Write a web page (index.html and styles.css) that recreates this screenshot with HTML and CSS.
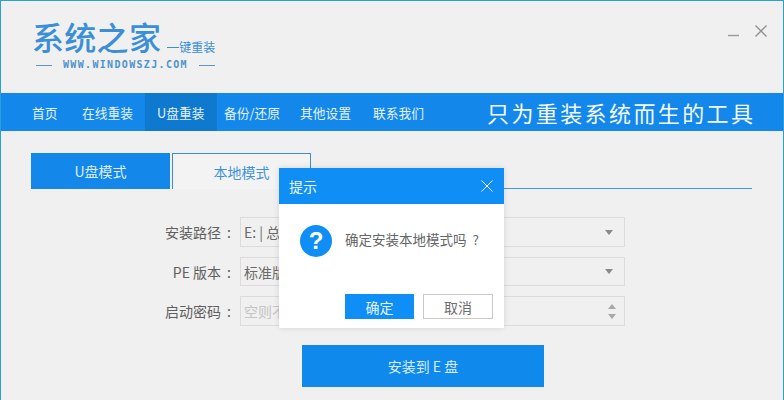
FILE: index.html
```html
<!DOCTYPE html>
<html lang="zh-CN">
<head>
<meta charset="utf-8">
<title>系统之家一键重装</title>
<link rel="stylesheet" href="styles.css">
</head>
<body>
<div class="window">
  <header class="header">
    <div class="logo">
      <div class="logo-top">
        <span class="logo-name">系统之家</span>
        <span class="logo-sub"><i class="logo-dash"></i>键重装</span>
      </div>
      <div class="logo-url">
        <i class="url-line"></i>
        <span class="url-text">WWW.WINDOWSZJ.COM</span>
        <i class="url-line"></i>
      </div>
    </div>
    <div class="win-controls">
      <svg class="icon-min" width="11" height="12" viewBox="0 0 11 12"><path d="M0 10.5H11" stroke="#9a9a9a" stroke-width="1.4" fill="none"/></svg>
      <svg class="icon-close" width="12" height="12" viewBox="0 0 12 12"><path d="M.5.5L11.5 11.5M11.5.5L.5 11.5" stroke="#8f8f8f" stroke-width="1.3" fill="none"/></svg>
    </div>
  </header>
  <nav class="nav">
    <a class="nav-item item-home">首页</a>
    <a class="nav-item item-online">在线重装</a>
    <a class="nav-item item-usb active">U盘重装</a>
    <a class="nav-item item-backup">备份/还原</a>
    <a class="nav-item item-other">其他设置</a>
    <a class="nav-item item-contact">联系我们</a>
    <span class="slogan">只为重装系统而生的工具</span>
  </nav>
  <main class="content">
    <div class="tabs">
      <div class="tab tab-on">U盘模式</div>
      <div class="tab tab-local">本地模式</div>
      <div class="tab-rule"></div>
    </div>
    <form class="form">
      <div class="row">
        <span class="label">安装路径<span class="colon">:</span></span>
        <div class="field"><span>E: | 总共</span><i class="arrow-down"></i></div>
      </div>
      <div class="row row-b">
        <span class="label">PE 版本<span class="colon">:</span></span>
        <div class="field"><span>标准版</span><i class="arrow-down"></i></div>
      </div>
      <div class="row row-c">
        <span class="label">启动密码<span class="colon">:</span></span>
        <div class="field field-pass"><span class="placeholder">空则不设置密码</span>
          <span class="spin"><i class="spin-up"></i><i class="spin-down"></i></span>
        </div>
      </div>
    </form>
    <div class="install"><span>安装到 E 盘</span></div>
  </main>
  <div class="dialog">
    <div class="dialog-title">
      <span>提示</span>
      <svg width="12" height="12" viewBox="0 0 12 12"><path d="M.5.5L11.5 11.5M11.5.5L.5 11.5" stroke="#fff" stroke-width="1" fill="none"/></svg>
    </div>
    <div class="dialog-body">
      <span class="q-icon">?</span>
      <span class="q-text">确定安装本地模式吗 ?</span>
    </div>
    <div class="dialog-btns">
      <span class="btn btn-ok">确定</span>
      <span class="btn btn-cancel">取消</span>
    </div>
  </div>
</div>
</body>
</html>
```
FILE: styles.css
```css
* { box-sizing: border-box; }
html, body { margin: 0; padding: 0; }
body {
  width: 784px;
  height: 400px;
  overflow: hidden;
  font-family: "Noto Sans CJK SC", "Liberation Sans", sans-serif;
}
i { display: block; font-style: normal; }
.window {
  position: relative;
  width: 784px;
  height: 400px;
  overflow: hidden;
  background: #f0f0f0;
  border: 1px solid #2a9fdc;
  border-bottom: 0;
}
.header {
  height: 92px;
  display: flex;
  justify-content: space-between;
  padding: 0 16px 0 32px;
}
.logo { padding-top: 14px; }
.logo-top { display: flex; align-items: flex-end; height: 42px; }
.logo-name {
  margin-left: -1px;
  font-size: 32px;
  line-height: 42px;
  letter-spacing: 0.3px;
  color: #3b8fd6;
  font-weight: 500;
}
.logo-sub {
  display: flex;
  align-items: center;
  margin: 0 0 2px 6px;
  font-size: 12px;
  line-height: 16px;
  color: #3b8fd6;
}
.logo-dash { width: 12px; height: 1px; background: #3b8fd6; }
.logo-url {
  display: flex;
  align-items: center;
  gap: 11px;
  margin: 1px 0 0 3px;
  height: 14px;
}
.url-line { width: 16px; height: 1px; background: #5c96c4; }
.url-text {
  font-family: "DejaVu Sans Mono", monospace;
  font-size: 10px;
  font-weight: 700;
  line-height: 14px;
  letter-spacing: 1.33px;
  color: #4d93cc;
  white-space: nowrap;
}
.win-controls { display: flex; gap: 16px; padding-top: 24px; }
.nav {
  height: 38px;
  display: flex;
  align-items: stretch;
  background: #1388ea;
  margin: 0 -1px;
}
.nav-item {
  display: flex;
  align-items: center;
  font-size: 12.75px;
  color: #e4f2fd;
  white-space: nowrap;
}
.item-home { margin-left: 32px; }
.item-online { margin-left: 24.5px; }
.item-usb { margin-left: 12px; padding: 0 12px; width: 72px; }
.item-backup { margin-left: 7px; }
.item-other { margin-left: 20px; }
.item-contact { margin-left: 22px; }
.active { background: #0f79d0; }
.slogan {
  margin-left: 63px;
  align-self: center;
  font-size: 22px;
  line-height: 30px;
  letter-spacing: 2.4px;
  color: #f4f9fe;
  white-space: nowrap;
}
.content { padding: 22px 0 0 30px; }
.tabs { display: flex; height: 36px; width: 721px; }
.tab {
  width: 139px;
  display: flex;
  align-items: center;
  justify-content: center;
  font-size: 14px;
}
.tab-on { background: #1388ea; color: #dcedfc; }
.tab-local {
  margin-left: 2px;
  height: 36px;
  color: #3f93da;
  border: 1px solid #3d8ccc;
  border-bottom: 0;
  background: #f3f3f3;
}
.tab-rule { flex: 1; height: 36px; border-bottom: 1px solid #3f9ae6; }
.form { margin: 28px 0 0 0; }
.row { display: flex; height: 30px; align-items: stretch; }
.row-b { margin-top: 10px; height: 29px; }
.row-c { margin-top: 10px; }
.label {
  width: 200px;
  text-align: right;
  align-self: center;
  font-size: 14px;
  line-height: 20px;
  color: #5f5f5f;
  white-space: nowrap;
}
.colon { margin-left: 6px; }
.field {
  margin-left: 9px;
  width: 385px;
  display: flex;
  align-items: center;
  justify-content: space-between;
  padding: 0 11px 0 3px;
  border: 1px solid #dcdcdc;
  background: #f0f0f0;
  font-size: 14px;
  color: #6a6a6a;
}
.placeholder { color: #c4c4c4; }
.arrow-down {
  width: 0;
  height: 0;
  border-left: 4.5px solid transparent;
  border-right: 4.5px solid transparent;
  border-top: 5px solid #8a8a8a;
}
.field-pass { padding-right: 8px; }
.spin { display: flex; flex-direction: column; gap: 5px; }
.spin-up, .spin-down {
  width: 0;
  height: 0;
  border-left: 4px solid transparent;
  border-right: 4px solid transparent;
}
.spin-up { border-bottom: 5px solid #a8a8a8; }
.spin-down { border-top: 5px solid #a8a8a8; }
.install {
  width: 242px;
  height: 42px;
  margin: 19px 0 0 271px;
  display: flex;
  align-items: center;
  justify-content: center;
  background: #0f8aec;
  font-size: 14px;
  color: #d9ecfc;
}
.dialog {
  position: absolute;
  left: 278px;
  top: 167px;
  width: 225px;
  height: 160px;
  background: #fff;
  box-shadow: 0 0 6px rgba(0, 0, 0, 0.12);
}
.dialog-title {
  height: 36px;
  display: flex;
  align-items: center;
  justify-content: space-between;
  padding: 0 11px 0 10px;
  background: #0f8ff5;
  color: #eef7ff;
  font-size: 14px;
}
.dialog-body {
  display: flex;
  align-items: flex-start;
  padding: 21px 0 0 21px;
  height: 90px;
}
.q-icon {
  width: 32px;
  height: 32px;
  border-radius: 50%;
  background: #0f8ff5;
  color: #fff;
  font-family: "Liberation Sans", sans-serif;
  font-weight: 700;
  font-size: 24px;
  line-height: 32px;
  text-align: center;
}
.q-text {
  margin: 4px 0 0 13px;
  font-size: 13.5px;
  line-height: 20px;
  word-spacing: 3px;
  color: #666;
  white-space: nowrap;
}
.dialog-btns { display: flex; gap: 9px; padding-left: 66px; }
.btn {
  height: 25px;
  display: flex;
  align-items: center;
  justify-content: center;
  font-size: 14px;
}
.btn-ok { width: 69px; background: #0f8ff5; color: #e6f3fe; }
.btn-cancel { width: 70px; border: 1px solid #c9c9c9; color: #6d6d6d; background: #fff; }
```
